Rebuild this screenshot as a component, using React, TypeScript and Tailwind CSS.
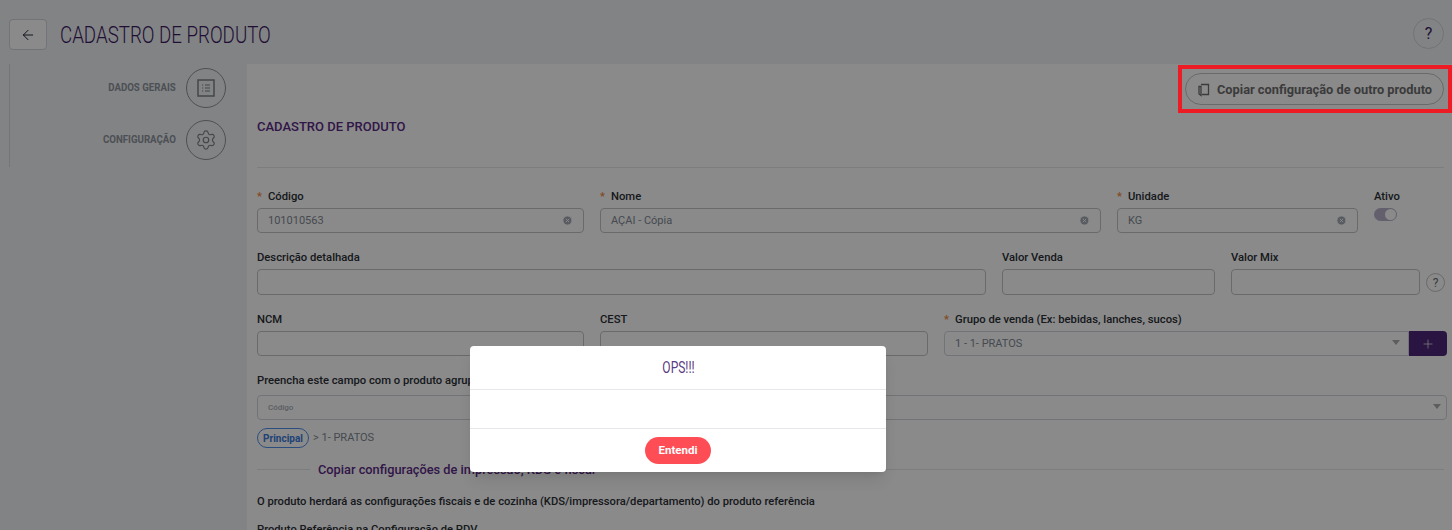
import { ArrowLeft, CircleX, Plus, Settings } from 'lucide-react';
import { FC, ReactNode } from 'react';

type FieldProps = {
  label: string;
  required?: boolean;
  value?: string;
  clear?: boolean;
  inputHeight?: string;
  className: string;
};

function Field({ label, required = false, value, clear = false, inputHeight = 'h-[25px]', className }: FieldProps) {
  return (
    <div className={`flex shrink-0 flex-col ${className}`}>
      <label className="h-[21px] text-[11.25px] font-medium leading-[19px] whitespace-nowrap text-[#2b2f36]">
        {required && <span className="mr-[6px] text-[#f08a3c]">*</span>}
        {label}
      </label>
      <div className={`flex items-center justify-between rounded border border-[#c4c4c4] px-2.5 text-[11px] text-[#7f8994] ${inputHeight}`}>
        <span className="pt-px">{value}</span>
        {clear && <CircleX className="h-[11px] w-[11px] fill-[#a3a9b3] text-white" />}
      </div>
    </div>
  );
}

function Caret() {
  return <span className="mb-[3px] h-0 w-0 border-x-[4.5px] border-t-[5px] border-x-transparent border-t-[#adadad]" />;
}

function ListIcon() {
  return (
    <svg viewBox="0 0 18 18" className="h-[18px] w-[18px]" fill="none" stroke="currentColor">
      <rect x="1" y="1" width="16" height="16" strokeWidth="1.5" />
      <path d="M5 6h1.2M5 9h1.2M5 12h1.2M8 6h5M8 9h5M8 12h5" strokeWidth="1.1" />
    </svg>
  );
}

function CopyIcon() {
  return (
    <svg viewBox="0 0 13 14" className="h-[14px] w-[13px]" fill="none" stroke="currentColor" strokeWidth="1.3">
      <path d="M2 3.5v7.5l2 1.5V3.5zM4 1.5h7.5v10H5" />
    </svg>
  );
}

type StepProps = { label: string; children: ReactNode };

function Step({ label, children }: StepProps) {
  return (
    <div className="flex h-10 items-center justify-end gap-2.5">
      <span className="origin-right scale-x-[0.88] text-[11px] font-bold whitespace-nowrap text-[#8d949c]">{label}</span>
      <div className="flex h-10 w-10 items-center justify-center rounded-full border border-[#8f949a] text-[#7d8389]">
        {children}
      </div>
    </div>
  );
}

const SideSteps: FC = () => (
  <aside className="w-[247px] shrink-0 pl-[9px]">
    <div className="flex h-[103px] flex-col gap-3 border-l border-[#d8d8d8] pt-1 pr-[21px]">
      <Step label="DADOS GERAIS">
        <ListIcon />
      </Step>
      <Step label="CONFIGURAÇÃO">
        <Settings className="h-[22px] w-[22px]" strokeWidth={1.3} />
      </Step>
    </div>
  </aside>
);

const ProductForm: FC = () => (
  <main className="min-w-0 flex-1 bg-white pr-[5px] pl-2.5">
    <div className="flex justify-end pt-[9px] pr-[3px]">
      <button className="flex h-8 w-[259px] items-center justify-center gap-[7px] rounded-full border border-[#c4c4c4] pt-px text-[12.8px] font-bold text-[#6e6e6e]">
        <CopyIcon />
        Copiar configuração de outro produto
      </button>
    </div>
    <h2 className="mt-[13px] h-[18px] text-[13px] leading-[17px] font-medium text-[#5b2a86]">CADASTRO DE PRODUTO</h2>
    <hr className="mt-[31px] mr-[3px] border-[#e5e7eb]" />

    <div className="mt-[19px] flex gap-4">
      <Field required label="Código" value="101010563" clear className="w-[327px]" />
      <Field required label="Nome" value="AÇAI - Cópia" clear className="w-[501px]" />
      <Field required label="Unidade" value="KG" clear className="w-[241px]" />
      <div className="flex flex-col">
        <span className="h-[21px] text-[11.25px] font-medium leading-[19px] text-[#2b2f36]">Ativo</span>
        <span className="flex h-[13px] w-[23px] items-center justify-end rounded-full bg-[#b9b0c9] px-px">
          <span className="h-[11px] w-[11px] rounded-full bg-white" />
        </span>
      </div>
    </div>

    <div className="mt-[15px] flex items-end gap-4">
      <Field label="Descrição detalhada" inputHeight="h-[26px]" className="w-[729px]" />
      <Field label="Valor Venda" inputHeight="h-[26px]" className="w-[213px]" />
      <div className="flex shrink-0 items-end gap-1.5">
        <Field label="Valor Mix" inputHeight="h-[26px]" className="w-[189px]" />
        <span className="mb-[3px] flex h-[19px] w-[19px] items-center justify-center rounded-full border border-[#c4c4c4] text-xs text-[#6e6e6e]">?</span>
      </div>
    </div>

    <div className="mt-[15px] flex gap-4">
      <Field label="NCM" className="w-[327px]" />
      <Field label="CEST" className="w-[328px]" />
      <div className="flex w-[503px] shrink-0 flex-col">
        <label className="h-[21px] text-[11.25px] font-medium leading-[19px] whitespace-nowrap text-[#2b2f36]">
          <span className="mr-[6px] text-[#f08a3c]">*</span>Grupo de venda (Ex: bebidas, lanches, sucos)
        </label>
        <div className="flex h-[25px]">
          <div className="flex flex-1 items-center justify-between rounded-l border border-[#d1d5db] pt-px pr-2 pl-2.5 text-[11px] text-[#7f8994]">
            1 - 1- PRATOS
            <Caret />
          </div>
          <button className="flex w-[38px] items-center justify-center rounded-r bg-[#4e2678] text-[#e5e7eb]">
            <Plus className="h-3.5 w-3.5" strokeWidth={1.3} />
          </button>
        </div>
      </div>
    </div>

    <p className="mt-[15px] h-[24px] text-[11.25px] font-medium leading-[19px] text-[#2b2f36]">Preencha este campo com o produto agrupador</p>
    <div className="flex h-[25px] items-center justify-between rounded border border-[#d1d5db] pr-[5px] pl-2.5 text-[8px] font-medium text-[#a8adb5]">
      Código
      <Caret />
    </div>

    <div className="mt-2 flex h-5 items-center gap-1 text-[11px] text-[#7f8994]">
      <span className="flex h-5 w-[52px] items-center justify-center rounded-full border border-[#4f8fe8] text-[10px] font-bold text-[#3b7ad9]">Principal</span>
      &gt; 1- PRATOS
    </div>

    <div className="mt-3 mr-[3px] flex items-center gap-2">
      <hr className="w-[53px] border-[#e5e7eb]" />
      <span className="text-[12.8px] font-medium whitespace-nowrap text-[#5b2a86]">Copiar configurações de impressão, KDS e fiscal</span>
      <hr className="flex-1 border-[#e5e7eb]" />
    </div>

    <p className="mt-[15px] text-[11.2px] font-medium text-[#2b2f36]">
      O produto herdará as configurações fiscais e de cozinha (KDS/impressora/departamento) do produto referência
    </p>
    <p className="mt-[11px] text-[11.2px] font-medium text-[#2b2f36]">Produto Referência na Configuração de PDV</p>
  </main>
);

const App: FC = () => {
  return (
    <div className="relative h-[530px] w-full overflow-hidden bg-[#f0f2f5] font-['Roboto',sans-serif]">
      <header className="flex h-16 items-start justify-between pt-[18px] pr-2 pl-[9px]">
        <div className="flex items-center gap-[13px]">
          <button className="flex h-[31px] w-[38px] items-center justify-center rounded border border-[#d1d5db] bg-white text-[#1f2937]">
            <ArrowLeft className="h-4 w-4" strokeWidth={1.5} />
          </button>
          <h1 className="mt-px origin-left scale-x-[0.78] text-2xl font-light whitespace-nowrap text-[#3b1a63]">CADASTRO DE PRODUTO</h1>
        </div>
        <button className="flex h-[31px] w-[31px] items-center justify-center rounded-full border border-[#d1d5db] text-base text-[#3b1a63]">?</button>
      </header>

      <div className="flex h-[466px]">
        <SideSteps />
        <ProductForm />
      </div>

      {/* modal backdrop */}
      <div className="absolute inset-0 z-10 bg-black/[0.46]" />
      <div className="absolute top-[346px] left-[470px] z-20 flex h-[126px] w-[416px] flex-col rounded bg-white shadow-lg">
        <div className="flex h-[44px] items-center justify-center border-b border-[#e5e7eb] text-base text-[#5a3a82]">
          <span className="scale-x-[0.75]">OPS!!!</span>
        </div>
        <div className="h-[39px] border-b border-[#e5e7eb]" />
        <div className="flex flex-1 items-center justify-center">
          <button className="flex h-[27px] w-[66px] items-center justify-center rounded-full bg-[#ff4d55] text-[11.5px] font-bold text-white">Entendi</button>
        </div>
      </div>

      {/* red highlight drawn on the screenshot */}
      <div className="absolute top-[65px] right-0 z-30 h-[48px] w-[274px] border-[4px] border-[#ed1c24]" />
    </div>
  );
};

export default App;
